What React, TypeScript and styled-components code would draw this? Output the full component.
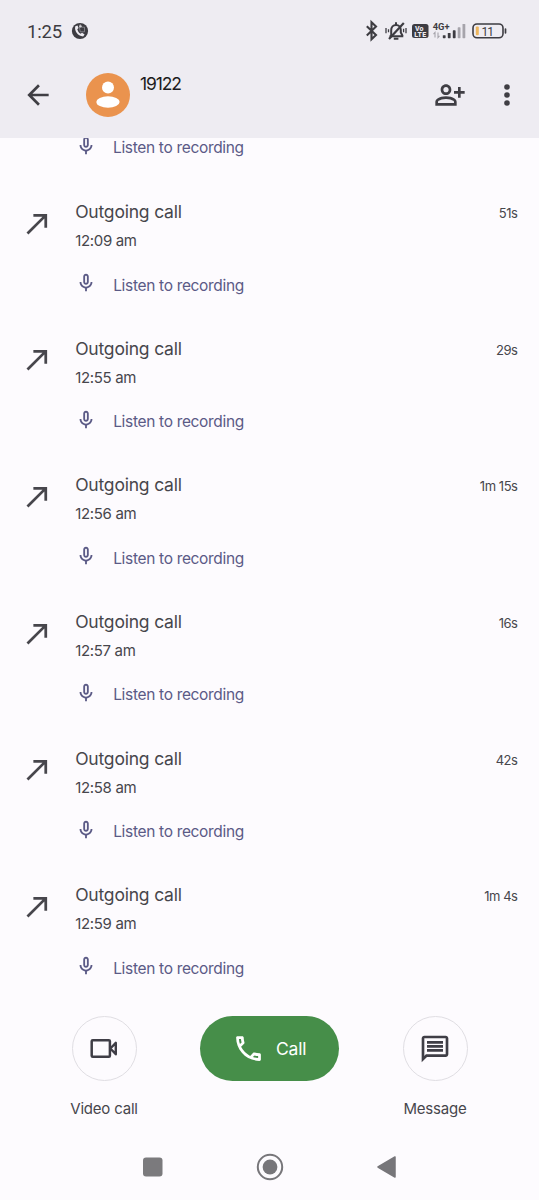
import React from "react";
import styled, { createGlobalStyle } from "styled-components";

const GlobalStyle = createGlobalStyle`
  body { margin: 0; background: #fdfbfe; }
  * { box-sizing: border-box; }
  svg { display: block; flex: none; }
`;

const Screen = styled.div`
  width: 539px;
  height: 1200px;
  display: flex;
  flex-direction: column;
  overflow: hidden;
  background: #fdfbfe;
  color: #47464c;
  font-family: Inter, "Liberation Sans", sans-serif;
`;

const Header = styled.header`
  height: 138px;
  flex: none;
  background: #eeecf2;
`;

const StatusBar = styled.div`
  height: 62px;
  display: flex;
  align-items: center;
  padding: 0 32px 0 27px;
  color: #3d3c42;
`;

const Clock = styled.span`
  font: 450 18.5px/22px Roboto, sans-serif;
  letter-spacing: -0.2px;
  width: 44px;
  padding-top: 2px;
`;

const StatusIcons = styled.div`
  margin-left: auto;
  display: flex;
  align-items: center;
`;

const AppBar = styled.div`
  height: 68px;
  display: flex;
  align-items: center;
  padding: 0 18.5px 2px 22px;
  color: #3f3e44;
`;

const Avatar = styled.div`
  width: 44px;
  height: 44px;
  margin: 0 10.5px 0 31.5px;
  border-radius: 50%;
  background: #ea934e;
`;

const ContactName = styled.h1`
  margin: 0 auto 22px 0;
  font-size: 17.5px;
  line-height: 22px;
  font-weight: 380;
  letter-spacing: -1.1px;
  color: #1c1b20;
`;

const MenuIcon = styled.div`
  margin-left: 26.5px;
`;

const CallList = styled.main`
  height: 862px;
  flex: none;
  overflow: hidden;
`;

const ScrolledEntry = styled.div`
  height: 54px;
  overflow: hidden;
`;

const Entry = styled.article`
  height: 136.65px;
  display: grid;
  grid-template-columns: 54.5px 1fr auto;
  padding: 0 21.5px 0 20.7px;
`;

const EntryArrow = styled.div`
  padding-top: 14.7px;
`;

const EntryTitle = styled.div`
  margin-top: 9px;
  font-size: 17.5px;
  line-height: 22px;
  font-weight: 380;
  letter-spacing: -0.2px;
`;

const EntryTime = styled.div`
  margin-top: 8px;
  font-size: 15px;
  line-height: 20px;
  font-weight: 390;
  letter-spacing: -0.33px;
`;

const Duration = styled.div`
  margin-top: 12.2px;
  font-size: 13px;
  line-height: 18px;
  letter-spacing: -0.45px;
`;

const Recording = styled.div<{ $scrolled?: boolean }>`
  display: flex;
  align-items: center;
  height: 24px;
  margin-top: ${(p) => (p.$scrolled ? "-2.5px" : "22px")};
  margin-left: ${(p) => (p.$scrolled ? "75px" : "0")};
  color: #5b5a86;
  font-size: 15.5px;
  font-weight: 380;
  letter-spacing: -0.33px;
  svg { margin: 0 16px 4px 0; }
`;

const Actions = styled.section`
  height: 132px;
  flex: none;
  display: flex;
  justify-content: space-between;
  padding: 16px 39px 0;
`;

const Action = styled.div`
  width: 130px;
  display: flex;
  flex-direction: column;
  align-items: center;
`;

const RoundButton = styled.div`
  width: 65px;
  height: 65px;
  border: 1px solid #e0dee3;
  border-radius: 50%;
  display: flex;
  align-items: center;
  justify-content: center;
  color: #3f3e46;
`;

const ActionLabel = styled.span`
  margin-top: 18px;
  font-size: 15px;
  line-height: 20px;
  letter-spacing: -0.2px;
  white-space: nowrap;
`;

const CallButton = styled.div`
  width: 139px;
  height: 65px;
  border-radius: 33px;
  background: #468e49;
  color: #fff;
  display: flex;
  align-items: center;
  padding-left: 32px;
  gap: 11px;
  font-size: 17.5px;
  letter-spacing: -0.2px;
`;

const NavBar = styled.nav`
  height: 68px;
  flex: none;
  display: flex;
  justify-content: space-between;
  align-items: center;
  padding: 1px 138px 0 138px;
`;

const Glyph = ({ d, size = 32 }: { d: string; size?: number }) => (
  <svg width={size} height={size} viewBox="0 0 24 24" fill="currentColor" fillRule="evenodd">
    <path d={d} />
  </svg>
);

const paths = {
  back: "M20 11H7.83l5.59-5.59L12 4l-8 8 8 8 1.41-1.41L7.83 13H20v-2z",
  outgoing: "M9 5v2h6.59L4 18.59 5.41 20 17 8.41V15h2V5z",
  mic: "M12 14c1.66 0 3-1.34 3-3V5c0-1.66-1.34-3-3-3S9 3.34 9 5v6c0 1.66 1.34 3 3 3zm-1-9c0-.55.45-1 1-1s1 .45 1 1v6c0 .55-.45 1-1 1s-1-.45-1-1V5zm6 6c0 2.76-2.24 5-5 5s-5-2.24-5-5H5c0 3.53 2.61 6.43 6 6.92V21h2v-3.08c3.39-.49 6-3.39 6-6.92h-2z",
  addPerson:
    "M20 9V6h-2v3h-3v2h3v3h2v-3h3V9h-3zM9 12c2.21 0 4-1.79 4-4s-1.79-4-4-4-4 1.79-4 4 1.79 4 4 4zm0-6c1.1 0 2 .9 2 2s-.9 2-2 2-2-.9-2-2 .9-2 2-2zM15.39 14.56C13.71 13.7 11.53 13 9 13c-2.53 0-4.71.7-6.39 1.56C1.61 15.07 1 16.1 1 17.22V20h16v-2.78c0-1.12-.61-2.15-1.61-2.66zM15 18H3v-.78c0-.38.2-.72.52-.88C4.71 15.73 6.63 15 9 15c2.37 0 4.29.73 5.48 1.34.32.16.52.5.52.88V18z",
  phone:
    "M6.54 5c.06.89.21 1.76.45 2.59l-1.2 1.2c-.41-1.2-.67-2.47-.76-3.79h1.51m9.86 12.02c.85.24 1.72.39 2.6.45v1.49c-1.32-.09-2.59-.35-3.8-.75l1.2-1.19M7.5 3H4c-.55 0-1 .45-1 1 0 9.39 7.61 17 17 17 .55 0 1-.45 1-1v-3.49c0-.55-.45-1-1-1-1.24 0-2.45-.2-3.57-.57-.1-.04-.21-.05-.31-.05-.26 0-.51.1-.71.29l-2.2 2.2c-2.83-1.45-5.15-3.76-6.59-6.59l2.2-2.2c.28-.28.36-.67.25-1.02C8.7 6.45 8.5 5.25 8.5 4c0-.55-.45-1-1-1z",
  chat: "M4 4h16v12H5.17L4 17.17V4m0-2c-1.1 0-1.99.9-1.99 2L2 22l4-4h14c1.1 0 2-.9 2-2V4c0-1.1-.9-2-2-2H4zm2 10h12v2H6v-2zm0-3h12v2H6V9zm0-3h12v2H6V6z",
};

const CallBadge = () => (
  <svg width="18" height="18" viewBox="0 0 18 18">
    <circle cx="9" cy="9" r="8.1" fill="#3d3c42" />
    <path d="M4.300 4.200c-1.200 4.200 2.200 9.800 7.800 10.200l1.500-2-2.500-1.600-1.600 1C8 11 6.800 9 6.300 7.200l1.200-1.100-1-2.600z" fill="#eeecf2" />
    <path d="M8.300 5.200h5.200v4.600H9.300z" fill="#3d3c42" stroke="#9a989f" strokeWidth=".7" />
    <path d="M9.200 2.500v3M8 4.200h3" stroke="#eeecf2" strokeWidth=".9" />
  </svg>
);

const StatusGlyphs = () => (
  <svg width="142" height="24" viewBox="365 19 142 24" fill="none" stroke="#3d3c42">
    <path d="M366.800 26.200l9.200 8.800-4.500 4.300V22.300l4.500 4.300-9.200 8.800" strokeWidth="2.100" />
    <g strokeWidth="2">
      <path d="M389.500 36.300h13.800M391.200 35.800v-5.500c0-3 2-5.400 4.900-5.400 2.600 0 4.700 2.200 4.700 5v2.700l1.900 3.500M396 22.200v2M393.800 38.800h4.600" />
      <path d="M403.800 23L389 39" strokeWidth="2.200" />
      <path d="M386 28v5.200M388.500 29.200v3M403.600 28.800v3.500M406 28v5.200" strokeWidth="1.300" />
    </g>
    <rect x="412" y="24" width="16.500" height="14" rx="2.500" fill="#3d3c42" stroke="none" />
    <g stroke="none" fontFamily="Roboto, sans-serif" fontWeight="800">
      <text x="415" y="30.600" fontSize="7" fill="#eeecf2">Vo</text>
      <text x="414.200" y="37" fontSize="7" textLength="12" fill="#eeecf2">LTE</text>
      <text x="432.700" y="29.500" fontSize="9" fill="#3d3c42" textLength="16.800" lengthAdjust="spacingAndGlyphs" fontWeight="700">4G+</text>
      <text x="481.500" y="35.500" fontSize="12" fontWeight="400" fill="#3d3c42" textLength="12.500">11</text>
    </g>
    <path d="M435 37.500v-5l-1.500 1.700M438 32.500v5l1.500-1.700" stroke="#a6a4ab" strokeWidth="1.100" />
    <g stroke="none" fill="#3d3c42">
      <rect x="442.800" y="35.200" width="2.800" height="3" rx=".6" />
      <rect x="447.800" y="33" width="2.800" height="5.200" rx=".6" />
      <rect x="452.800" y="30.300" width="2.800" height="7.900" rx=".6" />
      <rect x="457.700" y="27.300" width="2.800" height="10.900" rx=".6" fill="#a6a4ab" />
      <rect x="462.500" y="24" width="2.800" height="14.200" rx=".6" fill="#a6a4ab" />
    </g>
    <rect x="473" y="24" width="30" height="13.800" rx="4" strokeWidth="1.600" />
    <rect x="475.800" y="26.500" width="3" height="8.800" rx="1" fill="#eeb65d" stroke="none" />
    <path d="M505.500 29v3.800" strokeWidth="1.700" strokeLinecap="round" />
  </svg>
);

const VideoIcon = () => (
  <svg width="28" height="22" viewBox="0 0 28 22" fill="none" stroke="currentColor" strokeWidth="2.500" strokeLinejoin="round">
    <rect x="1.700" y="2.200" width="18.200" height="16.600" rx="1" />
    <path d="M20.300 10.500l5.500-5.700v11.400z" strokeWidth="2.400" />
  </svg>
);

const RecordingLink = ({ scrolled }: { scrolled?: boolean }) => (
  <Recording $scrolled={scrolled}>
    <Glyph d={paths.mic} size={22} />
    <span>Listen to recording</span>
  </Recording>
);

const calls = [
  { time: "12:09 am", duration: "51s" },
  { time: "12:55 am", duration: "29s" },
  { time: "12:56 am", duration: "1m 15s" },
  { time: "12:57 am", duration: "16s" },
  { time: "12:58 am", duration: "42s" },
  { time: "12:59 am", duration: "1m 4s" },
];

export default function App() {
  return (
    <Screen>
      <GlobalStyle />
      <Header>
        <StatusBar>
          <Clock>1:25</Clock>
          <CallBadge />
          <StatusIcons>
            <StatusGlyphs />
          </StatusIcons>
        </StatusBar>
        <AppBar>
          <Glyph d={paths.back} />
          <Avatar>
            <svg width="44" height="44" viewBox="0 0 44 44" fill="#fff">
              <circle cx="22" cy="14.500" r="6" />
              <ellipse cx="22" cy="29" rx="11.600" ry="5.800" />
            </svg>
          </Avatar>
          <ContactName>19122</ContactName>
          <Glyph d={paths.addPerson} />
          <MenuIcon>
            <svg width="28" height="28" viewBox="0 0 28 28" fill="currentColor">
              <circle cx="14" cy="6" r="2.800" />
              <circle cx="14" cy="14" r="2.800" />
              <circle cx="14" cy="22" r="2.800" />
            </svg>
          </MenuIcon>
        </AppBar>
      </Header>
      <CallList>
        <ScrolledEntry>
          <RecordingLink scrolled />
        </ScrolledEntry>
        {calls.map((c) => (
          <Entry key={c.time}>
            <EntryArrow>
              <Glyph d={paths.outgoing} size={33} />
            </EntryArrow>
            <div>
              <EntryTitle>Outgoing call</EntryTitle>
              <EntryTime>{c.time}</EntryTime>
              <RecordingLink />
            </div>
            <Duration>{c.duration}</Duration>
          </Entry>
        ))}
      </CallList>
      <Actions>
        <Action>
          <RoundButton>
            <VideoIcon />
          </RoundButton>
          <ActionLabel>Video call</ActionLabel>
        </Action>
        <CallButton>
          <Glyph d={paths.phone} size={33} />
          <span>Call</span>
        </CallButton>
        <Action>
          <RoundButton>
            <Glyph d={paths.chat} />
          </RoundButton>
          <ActionLabel>Message</ActionLabel>
        </Action>
      </Actions>
      <NavBar>
        <svg width="28" height="28" viewBox="0 0 28 28">
          <rect x="5" y="4.500" width="19.500" height="19" rx="3" fill="#7b7a7d" />
        </svg>
        <svg width="28" height="28" viewBox="0 0 28 28">
          <circle cx="14" cy="14" r="12.200" fill="none" stroke="#77767a" strokeWidth="2" />
          <circle cx="14" cy="14" r="7.400" fill="#77767a" />
        </svg>
        <svg width="28" height="28" viewBox="0 0 28 28">
          <path d="M5 14L22 4v20z" fill="#77767a" stroke="#77767a" strokeWidth="1.500" strokeLinejoin="round" />
        </svg>
      </NavBar>
    </Screen>
  );
}
